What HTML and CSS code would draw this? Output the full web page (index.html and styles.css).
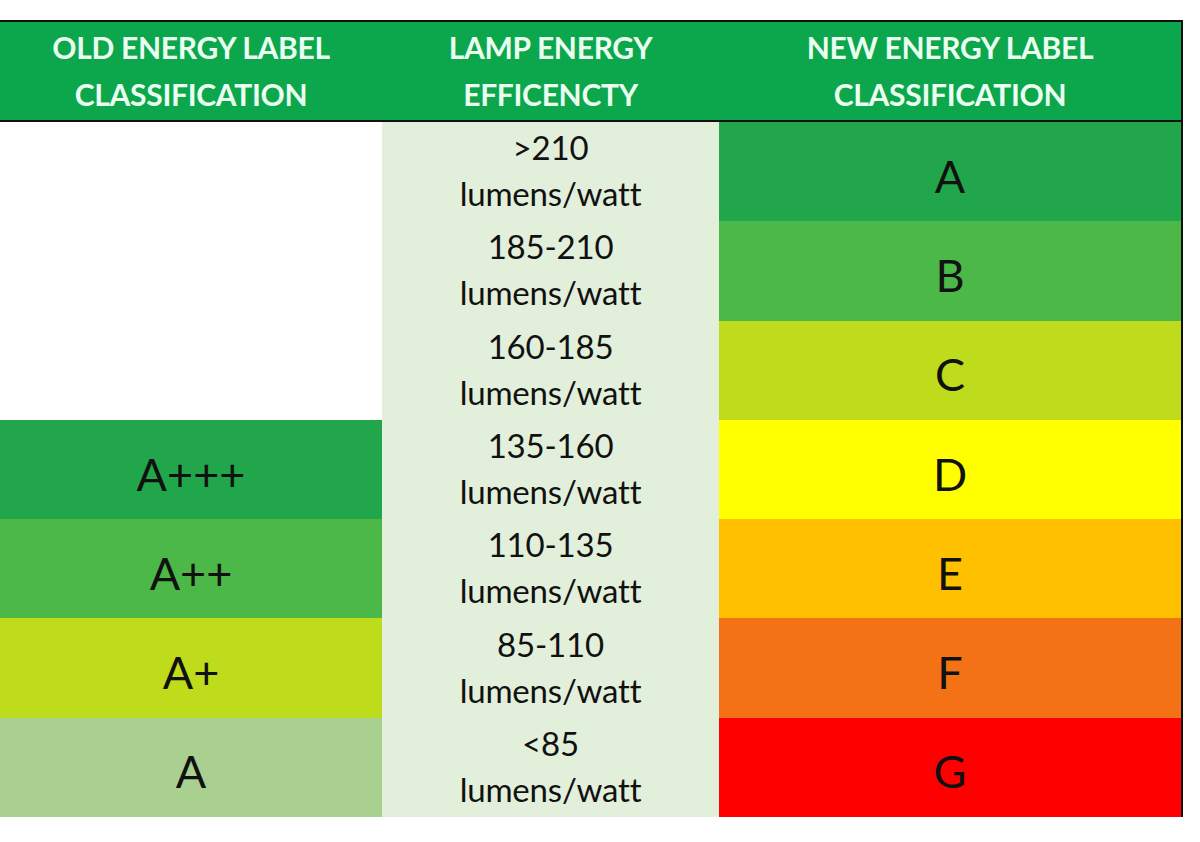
FILE: index.html
```html
<!DOCTYPE html>
<html>
<head>
<meta charset="utf-8">
<link rel="stylesheet" href="styles.css">
</head>
<body>
<div class="table">
  <div class="head">OLD ENERGY LABEL<br>CLASSIFICATION</div>
  <div class="head">LAMP ENERGY<br>EFFICENCTY</div>
  <div class="head">NEW ENERGY LABEL<br>CLASSIFICATION</div>

  <div class="old blank"></div>
  <div class="eff">&gt;210<br>lumens/watt</div>
  <div class="new c-a">A</div>

  <div class="old blank"></div>
  <div class="eff">185-210<br>lumens/watt</div>
  <div class="new c-b">B</div>

  <div class="old blank"></div>
  <div class="eff">160-185<br>lumens/watt</div>
  <div class="new c-c">C</div>

  <div class="old c-a">A+++</div>
  <div class="eff">135-160<br>lumens/watt</div>
  <div class="new c-d">D</div>

  <div class="old c-b">A++</div>
  <div class="eff">110-135<br>lumens/watt</div>
  <div class="new c-e">E</div>

  <div class="old c-c">A+</div>
  <div class="eff">85-110<br>lumens/watt</div>
  <div class="new c-f">F</div>

  <div class="old c-lt">A</div>
  <div class="eff">&lt;85<br>lumens/watt</div>
  <div class="new c-g">G</div>
</div>
</body>
</html>
```
FILE: styles.css
```css
html, body {
  margin: 0;
  padding: 0;
  background: #ffffff;
}
body {
  font-family: Lato, "Liberation Sans", sans-serif;
  color: #111111;
}
.table {
  margin-top: 20px;
  width: 1181px;
  display: grid;
  grid-template-columns: 382px 337px 462px;
  grid-template-rows: 100px repeat(7, 99.3px);
  border-top: 2px solid #111;
  border-right: 2px solid #111;
}
.table > div {
  display: flex;
  align-items: center;
  justify-content: center;
  text-align: center;
}
.head {
  background: #0ca64c;
  color: #eafff0;
  font-weight: bold;
  font-size: 30px;
  line-height: 47px;
  border-bottom: 2px solid #111;
  letter-spacing: -0.3px;
}
.eff {
  background: #e2efda;
  font-size: 33px;
  line-height: 46px;
  letter-spacing: -0.2px;
  padding-bottom: 3px;
  box-sizing: border-box;
}
.old, .new {
  font-size: 45px;
  padding-top: 8px;
  box-sizing: border-box;
}
.blank { background: #ffffff; }
.c-a { background: #21a64b; }
.c-b { background: #4cb847; }
.c-c { background: #bedb1c; }
.c-d { background: #ffff00; }
.c-e { background: #ffc000; }
.c-f { background: #f47216; }
.c-g { background: #ff0000; }
.c-lt { background: #a9d08e; }
```
